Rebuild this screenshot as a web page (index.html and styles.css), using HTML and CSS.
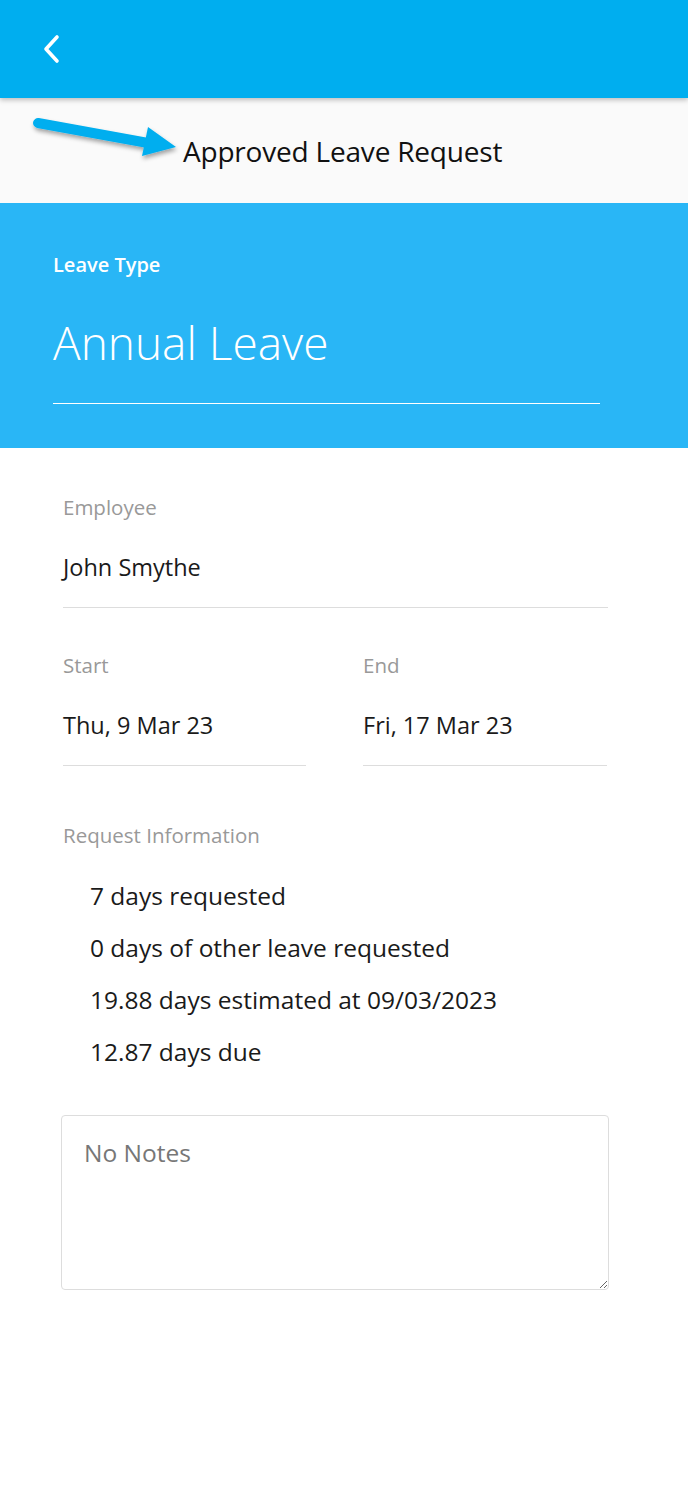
FILE: index.html
```html
<!DOCTYPE html>
<html>
<head>
<meta charset="utf-8">
<link rel="stylesheet" href="styles.css">
</head>
<body>
<header class="topbar">
  <svg class="back" width="24" height="32" viewBox="0 0 24 32"><path d="M17 4 L6 16 L17 28" fill="none" stroke="#fff" stroke-width="3.6" stroke-linecap="round" stroke-linejoin="round"/></svg>
</header>
<div class="subhead">
  <svg class="pointer" width="160" height="60" viewBox="0 0 160 60">
    <defs><filter id="sh" x="-20%" y="-50%" width="140%" height="200%"><feDropShadow dx="1" dy="3" stdDeviation="2" flood-color="#000" flood-opacity="0.35"/></filter></defs>
    <g filter="url(#sh)">
      <line x1="10" y1="13" x2="120" y2="33" stroke="#00aeef" stroke-width="10" stroke-linecap="round"/>
      <polygon points="120,17 148,37 114,46" fill="#00aeef"/>
    </g>
  </svg>
  <h1 class="title">Approved Leave Request</h1>
</div>
<section class="leave-type">
  <div class="lt-label">Leave Type</div>
  <div class="lt-value">Annual Leave</div>
</section>
<main class="content">
  <div class="field">
    <div class="label">Employee</div>
    <div class="value">John Smythe</div>
  </div>
  <div class="row">
    <div class="field">
      <div class="label">Start</div>
      <div class="value">Thu, 9 Mar 23</div>
    </div>
    <div class="field">
      <div class="label">End</div>
      <div class="value">Fri, 17 Mar 23</div>
    </div>
  </div>
  <div class="info">
    <div class="label">Request Information</div>
    <ul class="info-list">
      <li>7 days requested</li>
      <li>0 days of other leave requested</li>
      <li>19.88 days estimated at 09/03/2023</li>
      <li>12.87 days due</li>
    </ul>
  </div>
  <textarea class="notes" placeholder="No Notes"></textarea>
</main>
</body>
</html>
```
FILE: styles.css
```css
* { box-sizing: border-box; }
body {
  margin: 0;
  font-family: "Open Sans", "Noto Sans", sans-serif;
  background: #fff;
  color: #222;
}
.topbar {
  height: 98px;
  background: #00aeef;
  display: flex;
  align-items: center;
  padding-left: 40px;
  position: relative;
  z-index: 2;
  box-shadow: 0 2px 5px rgba(0,0,0,0.25);
}
.back { display: block; }
.subhead {
  height: 105px;
  background: #fafafa;
  display: flex;
  align-items: center;
  padding-left: 183px;
  position: relative;
}
.pointer {
  position: absolute;
  left: 28px;
  top: 12px;
}
.title {
  margin: 0;
  font-weight: 400;
  font-size: 28px;
  color: #111;
  letter-spacing: -0.2px;
}
.leave-type {
  background: #29b6f6;
  height: 245px;
  padding: 50px 88px 0 53px;
  color: #fff;
}
.lt-label {
  font-size: 20px;
  font-weight: 600;
  line-height: 24px;
}
.lt-value {
  font-size: 46px;
  font-weight: 300;
  line-height: 60px;
  margin-top: 35px;
  padding-bottom: 31px;
  border-bottom: 1px solid #fff;
}
.content {
  padding: 46px 80px 0 63px;
}
.field {
  border-bottom: 1px solid #ddd;
  padding-bottom: 25px;
}
.label {
  font-size: 20.5px;
  color: #999;
  line-height: 26px;
}
.value {
  font-size: 23.5px;
  line-height: 30px;
  margin-top: 32px;
  color: #1a1a1a;
}
.row {
  display: grid;
  grid-template-columns: 243px 244px;
  column-gap: 57px;
  margin-top: 44px;
}
.info { margin-top: 56px; }
.info-list {
  list-style: none;
  margin: 22px 0 0;
  padding: 0 0 0 27px;
}
.info-list li {
  font-size: 24.5px;
  line-height: 52px;
  color: #1a1a1a;
}
.notes {
  display: block;
  width: 548px;
  height: 175px;
  margin: 37px 0 0 -2px;
  border: 1px solid #ddd;
  border-radius: 4px;
  padding: 20px 22px;
  font-family: "Open Sans", "Noto Sans", sans-serif;
  font-size: 24.5px;
  color: #222;
  background: #fff;
  resize: vertical;
}
.notes::placeholder { color: #777; }
```
